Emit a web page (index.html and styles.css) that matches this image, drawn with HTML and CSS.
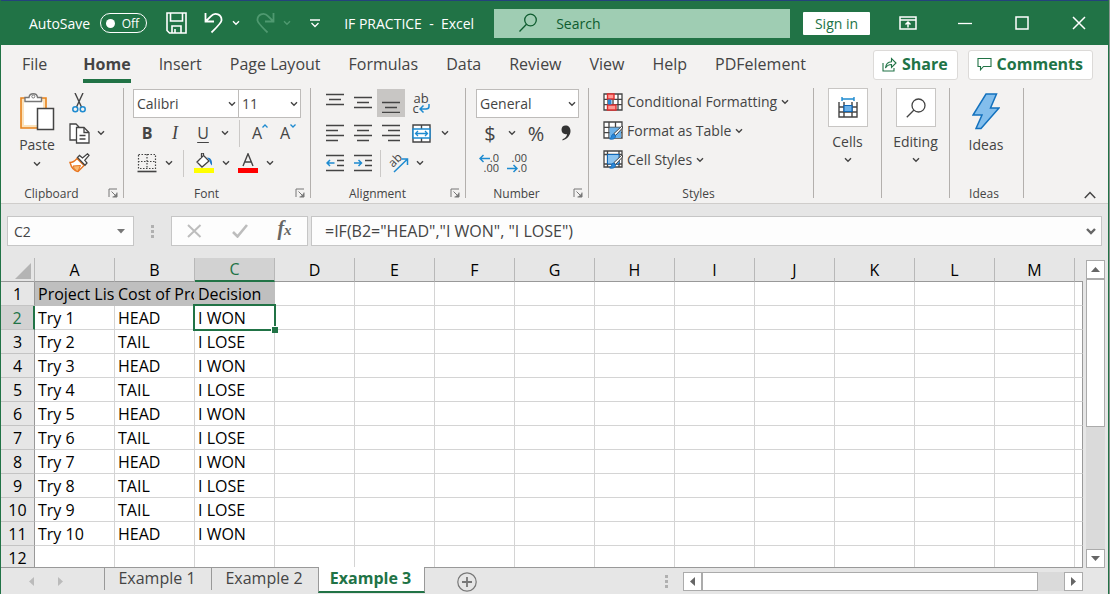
FILE: index.html
```html
<!DOCTYPE html>
<html lang="en">
<head>
    <meta charset="UTF-8">
    <meta name="viewport" content="width=device-width, initial-scale=1.0">
    <title>IF PRACTICE - Excel</title>
    <link rel="stylesheet" href="styles.css">
</head>
<body>

<svg class="defs" width="0" height="0" aria-hidden="true">
    <symbol id="chev" viewBox="0 0 8 6"><path d="M1 1.2l3 3 3-3" fill="none" stroke="currentColor" stroke-width="1.4"/></symbol>
    <symbol id="launcher" viewBox="0 0 10 10"><path d="M1 9V1h8M3.500 3.500l4 4M9 4.500v4.500H4.500" fill="none" stroke="#777"/><path d="M9 5v4H5z" fill="#777"/></symbol>
    <symbol id="brush" viewBox="0 0 14 14"><path d="M13.500.5L12.500.5 5 7.500l1.500 2L13.500 2z" fill="#fff" stroke="#444"/><path d="M5 8c-2 0-2.500 1.500-2.500 3L.5 13c3 .8 6 0 6-3z" fill="#2b88d8" stroke="#1068b8" stroke-width=".8"/></symbol>
</svg>

<div class="app">

<header class="titlebar">
    <label class="autosave">AutoSave
        <span class="toggle"><input type="checkbox" aria-label="AutoSave">Off</span>
    </label>
    <div class="quick">
        <button class="quick-btn save" aria-label="Save">
            <svg width="21" height="22" viewBox="0 0 21 22" fill="none" stroke="#fff" stroke-width="1.6"><path d="M1 1h19v20H3.500L1 18.500zM4.500 1v8h12V1M6 21v-7h9v7M9 21v-4"/></svg>
        </button>
        <button class="quick-btn" aria-label="Undo">
            <svg width="20" height="22" viewBox="0 0 20 22" fill="none" stroke="#fff" stroke-width="1.8"><path d="M1.500 1v8.500H10M1.500 9.500L7 4.200C11-.5 18 2.500 17.500 8.500c-.3 2.500-2 4-10 12"/></svg>
            <svg class="chev" width="8" height="6"><use href="#chev"/></svg>
        </button>
        <button class="quick-btn dim" aria-label="Redo">
            <svg width="20" height="22" viewBox="0 0 20 22" fill="none" stroke="currentColor" stroke-width="1.8"><path d="M18.500 1v8.500H10M18.500 9.500L13 4.200C9-.5 2 2.500 2.500 8.500c.3 2.500 2 4 10 12"/></svg>
            <svg class="chev" width="8" height="6"><use href="#chev"/></svg>
        </button>
        <button class="quick-btn customize" aria-label="Customize Quick Access Toolbar">
            <svg width="10" height="9" viewBox="0 0 10 9" fill="none" stroke="#fff" stroke-width="1.3"><path d="M0 1h10M1.500 4L5 7.500 8.500 4"/></svg>
        </button>
    </div>
    <h1 class="doc-title">IF PRACTICE &nbsp;- &nbsp;Excel</h1>
    <div class="search">
        <svg width="20" height="20" viewBox="0 0 20 20" fill="none" stroke="#0e5c2f" stroke-width="1.3"><circle cx="12.500" cy="7" r="5.800"/><path d="M8.500 11.200L1.500 18.500"/></svg>
        <input type="search" placeholder="Search" aria-label="Search">
    </div>
    <button class="sign-in">Sign in</button>
    <div class="window-btns">
        <button aria-label="Ribbon Display Options">
            <svg width="18" height="14" viewBox="0 0 18 14" fill="none" stroke="#fff" stroke-width="1.5"><path d="M1 1h16v12H1zM1 4h16M9 11.500V6M6.500 8.500L9 6l2.500 2.500"/></svg>
        </button>
        <button aria-label="Minimize">
            <svg width="14" height="14" viewBox="0 0 14 14"><path d="M0 7.500h14" stroke="#fff" stroke-width="1.300"/></svg>
        </button>
        <button aria-label="Maximize">
            <svg width="14" height="14" viewBox="0 0 14 14"><path d="M1 1h12v12H1z" fill="none" stroke="#fff" stroke-width="1.500"/></svg>
        </button>
        <button aria-label="Close">
            <svg width="14" height="14" viewBox="0 0 14 14"><path d="M1 1l12 12M13 1L1 13" stroke="#fff" stroke-width="1.500"/></svg>
        </button>
    </div>
</header>

<nav class="tabs">
    <button class="tab tab-file">File</button>
    <button class="tab active">Home</button>
    <button class="tab">Insert</button>
    <button class="tab">Page Layout</button>
    <button class="tab">Formulas</button>
    <button class="tab">Data</button>
    <button class="tab">Review</button>
    <button class="tab">View</button>
    <button class="tab">Help</button>
    <button class="tab">PDFelement</button>
    <div class="tab-actions">
        <button class="action">
            <svg width="15" height="15" viewBox="0 0 15 15" fill="none" stroke="#217346" stroke-width="1.100"><path d="M1 6v8h11v-3M3.500 11C4 6.500 6 5 9.500 4.800V1.500L14 6l-4.500 4.500V7.500C7 7.500 5 8.500 3.500 11z"/></svg>
            Share
        </button>
        <button class="action">
            <svg width="15" height="14" viewBox="0 0 15 14" fill="none" stroke="#217346" stroke-width="1.100"><path d="M1 1.500h13v8H6.500L3.500 12.800V9.500H1z"/></svg>
            Comments
        </button>
    </div>
</nav>

<section class="ribbon">
    <div class="group clipboard">
        <div class="group-body side">
            <button class="big">
                <svg width="36" height="40" viewBox="0 0 36 40"><path d="M2 6h25v30H2z" fill="#fbe3bd" stroke="#e8831c" stroke-width="1.600"/><path d="M5 9h19v24H5z" fill="#fff"/><path d="M6 9.500V5.500h4C10.500.5 18 .5 18.500 5.500h4v4z" fill="#fff" stroke="#777" stroke-width="1.400"/><circle cx="14.300" cy="4.500" r="1.500" fill="#fff" stroke="#777"/><path d="M18.500 16.500h16v21h-16z" fill="#fff" stroke="#444" stroke-width="1.500"/></svg>
                <span>Paste</span>
                <svg class="chev" width="8" height="6"><use href="#chev"/></svg>
            </button>
            <div class="rows">
                <div class="row">
                    <button class="btn" aria-label="Cut">
                        <svg width="14" height="20" viewBox="0 0 14 20" fill="none"><path d="M3 0l6.500 14M11 0L4.500 14" stroke="#444" stroke-width="1.400"/><circle cx="3.300" cy="16.300" r="2.500" stroke="#1e8bd0" stroke-width="1.500"/><circle cx="10.700" cy="16.300" r="2.500" stroke="#1e8bd0" stroke-width="1.500"/></svg>
                    </button>
                </div>
                <div class="row">
                    <button class="btn" aria-label="Copy">
                        <svg width="21" height="21" viewBox="0 0 21 21" fill="#fff" stroke="#444" stroke-width="1.300"><path d="M7 17H1V1h6l3 3M7.500 4.500h7.500l5 5V20H7.500z"/><path d="M15 4.500v5h5M10.500 12.500h6M10.500 16h6" fill="none"/></svg>
                    </button>
                    <button class="drop" aria-label="Copy options"><svg width="8" height="6"><use href="#chev"/></svg></button>
                </div>
                <div class="row">
                    <button class="btn" aria-label="Format Painter">
                        <svg width="21" height="20" viewBox="0 0 21 20"><path d="M8 5.500l7 7L9 18.500C6 18 2.500 15 1 9.500 4 9.500 6 8 8 5.500z" fill="#fff" stroke="#e8731c" stroke-width="1.400"/><path d="M4 13l7.500-.5L9 18.500C7 18 5.500 16.500 4 13z" fill="#f9b870" stroke="#e8731c"/><path d="M8.500 4.500l2-2 3 2.500L18.500.800l1.500 1.500-4.200 5 2.200 2.700-2 2.200z" fill="#fff" stroke="#444" stroke-width="1.300"/></svg>
                    </button>
                </div>
            </div>
        </div>
        <div class="group-foot"><span>Clipboard</span><button aria-label="Clipboard settings"><svg width="10" height="10"><use href="#launcher"/></svg></button></div>
    </div>

    <div class="group font">
        <div class="group-body">
            <div class="row">
                <span class="pick pick-font"><select aria-label="Font"><option>Calibri</option></select><svg width="8" height="6"><use href="#chev"/></svg></span>
                <span class="pick pick-size"><select aria-label="Font size"><option>11</option></select><svg width="8" height="6"><use href="#chev"/></svg></span>
            </div>
            <div class="row">
                <button class="btn bold">B</button>
                <button class="btn italic">I</button>
                <button class="btn underline">U</button>
                <button class="drop" aria-label="Underline style"><svg width="8" height="6"><use href="#chev"/></svg></button>
                <span class="sep"></span>
                <button class="btn" aria-label="Increase Font Size">A<svg class="sup" width="6" height="4" viewBox="0 0 6 4"><path d="M.5 3.500L3 1l2.500 2.500" fill="none" stroke="#1e8bd0" stroke-width="1.300"/></svg></button>
                <button class="btn" aria-label="Decrease Font Size">A<svg class="sup" width="6" height="4" viewBox="0 0 6 4"><path d="M.5.5L3 3 5.500.5" fill="none" stroke="#1e8bd0" stroke-width="1.300"/></svg></button>
            </div>
            <div class="row">
                <button class="btn" aria-label="Borders">
                    <svg width="20" height="20" viewBox="0 0 20 20" fill="none" stroke="#444"><path d="M1.500 1.500h17v14h-17zM10 1v15M1 8.500h18" stroke-dasharray="1.500 1.500" stroke-width="1.200"/><path d="M.5 18.500h19" stroke-width="1.600"/></svg>
                </button>
                <button class="drop" aria-label="Border options"><svg width="8" height="6"><use href="#chev"/></svg></button>
                <span class="sep"></span>
                <button class="btn" aria-label="Fill Color">
                    <svg width="20" height="20" viewBox="0 0 20 20"><path d="M9 3L3 9l5 5 7-6-5.500-5.500V1C9.500-.500 7.500-.500 7.500 1v4" fill="#fff" stroke="#444" stroke-width="1.300"/><path d="M13 4.500c4 0 5.500 3 5 8-1.500-1-2-3-2.500-5z" fill="#1e78c8"/><path d="M0 15h20v5H0z" fill="#ff0"/></svg>
                </button>
                <button class="drop" aria-label="Fill color options"><svg width="8" height="6"><use href="#chev"/></svg></button>
                <button class="btn" aria-label="Font Color">
                    <svg width="20" height="20" viewBox="0 0 20 20"><path d="M5 13L10 .800 15 13M6.500 9h7" fill="none" stroke="#444" stroke-width="1.400"/><path d="M0 15h20v5H0z" fill="red"/></svg>
                </button>
                <button class="drop" aria-label="Font color options"><svg width="8" height="6"><use href="#chev"/></svg></button>
            </div>
        </div>
        <div class="group-foot"><span>Font</span><button aria-label="Font settings"><svg width="10" height="10"><use href="#launcher"/></svg></button></div>
    </div>

    <div class="group align">
        <div class="group-body">
            <div class="row">
                <button class="btn" aria-label="Top Align"><svg width="18" height="20" viewBox="0 0 18 20"><path d="M0 1.500h18M3 6.500h12M0 11.500h18" stroke="#444" stroke-width="1.300"/></svg></button>
                <button class="btn" aria-label="Middle Align"><svg width="18" height="20" viewBox="0 0 18 20"><path d="M0 4.500h18M3 9.500h12M0 14.500h18" stroke="#444" stroke-width="1.300"/></svg></button>
                <button class="btn pressed" aria-label="Bottom Align"><svg width="18" height="20" viewBox="0 0 18 20"><path d="M0 9.500h18M3 14.500h12M0 19.300h18" stroke="#444" stroke-width="1.300"/></svg></button>
                <button class="btn wide wrap" aria-label="Wrap Text"><span>ab</span><span>c<svg width="11" height="9" viewBox="0 0 11 9" fill="none" stroke="#1e8bd0" stroke-width="1.500"><path d="M10 0v2.500c0 2-1 2.500-3 2.500H1.500M4.500 1.500L1 5l3.500 3.500"/></svg></span></button>
            </div>
            <div class="row">
                <button class="btn" aria-label="Align Left"><svg width="18" height="18" viewBox="0 0 18 18"><path d="M0 1.500h18M0 6.500h12M0 11.500h18M0 16.500h12" stroke="#444" stroke-width="1.400"/></svg></button>
                <button class="btn" aria-label="Center"><svg width="18" height="18" viewBox="0 0 18 18"><path d="M0 1.500h18M3 6.500h12M0 11.500h18M3 16.500h12" stroke="#444" stroke-width="1.400"/></svg></button>
                <button class="btn" aria-label="Align Right"><svg width="18" height="18" viewBox="0 0 18 18"><path d="M0 1.500h18M6 6.500h12M0 11.500h18M6 16.500h12" stroke="#444" stroke-width="1.400"/></svg></button>
                <button class="btn wide" aria-label="Merge and Center"><svg width="19" height="19" viewBox="0 0 19 19"><path d="M1 1h17v17H1zM9.500 1v17" fill="#fff" stroke="#444" stroke-width="1.400"/><path d="M1 5h17v9H1z" fill="#fff" stroke="#1e8bd0" stroke-width="1.500"/><path d="M3.500 9.500h12M6 7L3.500 9.500 6 12M13 7l2.500 2.500L13 12" fill="none" stroke="#1e8bd0" stroke-width="1.300"/></svg></button>
                <button class="drop" aria-label="Merge options"><svg width="8" height="6"><use href="#chev"/></svg></button>
            </div>
            <div class="row">
                <button class="btn" aria-label="Decrease Indent"><svg width="18" height="18" viewBox="0 0 18 18" fill="none"><path d="M0 1.500h18M11 6.500h7M11 11.500h7M0 16.500h18" stroke="#444" stroke-width="1.400"/><path d="M8.500 9H1M4 6L1 9l3 3" stroke="#1e8bd0" stroke-width="1.500"/></svg></button>
                <button class="btn" aria-label="Increase Indent"><svg width="18" height="18" viewBox="0 0 18 18" fill="none"><path d="M0 1.500h18M11 6.500h7M11 11.500h7M0 16.500h18" stroke="#444" stroke-width="1.400"/><path d="M0 9h7.500M4.500 6l3 3-3 3" stroke="#1e8bd0" stroke-width="1.500"/></svg></button>
                <span class="sep"></span>
                <button class="btn" aria-label="Orientation"><svg class="orient" width="22" height="20" viewBox="0 0 22 20"><text x="0" y="0" transform="translate(6 15) rotate(-45)" font-family="Open Sans" font-size="12" fill="#444">ab</text><path d="M7 19L20 6.500M14.500 6H20.500V12" fill="none" stroke="#1e8bd0" stroke-width="1.500"/></svg></button>
                <button class="drop" aria-label="Orientation options"><svg width="8" height="6"><use href="#chev"/></svg></button>
            </div>
        </div>
        <div class="group-foot"><span>Alignment</span><button aria-label="Alignment settings"><svg width="10" height="10"><use href="#launcher"/></svg></button></div>
    </div>

    <div class="group number">
        <div class="group-body">
            <div class="row">
                <span class="pick pick-number"><select aria-label="Number format"><option>General</option></select><svg width="8" height="6"><use href="#chev"/></svg></span>
            </div>
            <div class="row">
                <button class="btn sign">$</button>
                <button class="drop" aria-label="Currency options"><svg width="8" height="6"><use href="#chev"/></svg></button>
                <button class="btn sign wide">%</button>
                <button class="btn" aria-label="Comma Style"><svg width="10" height="16" viewBox="0 0 10 16"><path d="M4.500.5C7.500.5 9.500 2.500 9.500 6c0 4-3 8-8 9.500v-1.200C4.500 13 6 11 6 9 3 9.800.5 8 .5 4.800.5 2 2.200.5 4.500.5z" fill="#333"/></svg></button>
            </div>
            <div class="row">
                <button class="btn decimals" aria-label="Increase Decimal"><span><svg width="11" height="9" viewBox="0 0 11 9" fill="none" stroke="#1e8bd0" stroke-width="1.500"><path d="M11 4.500H1M4.500 1L1 4.500 4.500 8"/></svg>.0</span><span>.00</span></button>
                <button class="btn decimals" aria-label="Decrease Decimal"><span>.00</span><span><svg width="11" height="9" viewBox="0 0 11 9" fill="none" stroke="#1e8bd0" stroke-width="1.500"><path d="M0 4.500h10M6.500 1L10 4.500 6.500 8"/></svg>.0</span></button>
            </div>
        </div>
        <div class="group-foot"><span>Number</span><button aria-label="Number settings"><svg width="10" height="10"><use href="#launcher"/></svg></button></div>
    </div>

    <div class="group styles">
        <div class="group-body">
            <button class="style-btn">
                <svg width="20" height="18" viewBox="0 0 20 18"><path d="M1 1h18v16H1zM1 6.300h18M1 11.700h18M5 1v16M10 1v16M15 1v16" fill="#fff" stroke="#444" stroke-width="1.300"/><path d="M4.500 1H11v5H4.500zM4.500 12H13v5H4.500z" fill="#ff9a94" stroke="#e03030" stroke-width="1.400"/><path d="M5 6.500h3.500v5H5z" fill="#2b88d8"/></svg>
                Conditional Formatting
                <svg class="chev" width="8" height="6"><use href="#chev"/></svg>
            </button>
            <button class="style-btn">
                <svg width="20" height="19" viewBox="0 0 20 19"><path d="M1 1h18v16H1zM1 6.300h18M1 11.700h18M6 1v16M12.500 1v16" fill="#fff" stroke="#444" stroke-width="1.300"/><path d="M6.500 6.500H18v10.500H6.500z" fill="#6cb2ea"/><use href="#brush" x="6" y="5" width="14" height="14"/></svg>
                Format as Table
                <svg class="chev" width="8" height="6"><use href="#chev"/></svg>
            </button>
            <button class="style-btn">
                <svg width="20" height="19" viewBox="0 0 20 19"><path d="M1 1h18v16H1zM1 4.500h18M1 14h18M4.500 1v16M16 1v16" fill="#fff" stroke="#444" stroke-width="1.300"/><path d="M4.500 4.500H16V14H4.500z" fill="#8cc4f0" stroke="#1068b8"/><use href="#brush" x="6" y="5" width="14" height="14"/></svg>
                Cell Styles
                <svg class="chev" width="8" height="6"><use href="#chev"/></svg>
            </button>
        </div>
        <div class="group-foot"><span>Styles</span></div>
    </div>

    <div class="group narrow">
        <button class="boxed">
            <span class="box"><svg width="20" height="22" viewBox="0 0 20 22"><path d="M1 5v15h18V5M1 10h18M1 15h18M6 5v15M14 5v15" fill="none" stroke="#444" stroke-width="1.400"/><path d="M6 8.500h8v6H6z" fill="#6cb2ea" stroke="#1068b8" stroke-width="1.200"/><path d="M4 2h12M4 0v4M16 0v4" fill="none" stroke="#1e8bd0" stroke-width="1.400"/></svg></span>
            <span>Cells</span>
            <svg class="chev" width="8" height="6"><use href="#chev"/></svg>
        </button>
    </div>
    <div class="group narrow">
        <button class="boxed">
            <span class="box"><svg width="20" height="20" viewBox="0 0 20 20" fill="none" stroke="#444" stroke-width="1.300"><circle cx="12.500" cy="7.500" r="6.500"/><path d="M8 12L.8 19.200"/></svg></span>
            <span>Editing</span>
            <svg class="chev" width="8" height="6"><use href="#chev"/></svg>
        </button>
    </div>
    <div class="group ideas">
        <div class="group-body">
            <button class="big">
                <svg width="28" height="38" viewBox="0 0 28 38"><path d="M14 2h10.500l-6 14H27L9 36.500H4L10 23H1z" fill="#83beec" stroke="#1371bd" stroke-width="1.500"/></svg>
                <span>Ideas</span>
            </button>
        </div>
        <div class="group-foot"><span>Ideas</span></div>
    </div>
    <button class="collapse" aria-label="Collapse the Ribbon">
        <svg width="12" height="8" viewBox="0 0 12 8"><path d="M.8 7L6 1.500 11.200 7" fill="none" stroke="#444" stroke-width="1.500"/></svg>
    </button>
</section>

<section class="formula-bar">
    <div class="name-box">
        <input type="text" value="C2" aria-label="Name Box">
        <svg width="8" height="5" viewBox="0 0 8 5"><path d="M0 0h8L4 4.500z" fill="#777"/></svg>
    </div>
    <svg class="dots" width="3" height="13" viewBox="0 0 3 13"><path d="M0 0h3v3H0zM0 5h3v3H0zM0 10h3v3H0z" fill="#b0b0b0"/></svg>
    <div class="entry">
        <button aria-label="Cancel"><svg width="15" height="14" viewBox="0 0 15 14"><path d="M1 1l12.500 12M13.500 1L1 13" stroke="#bdbdbd" stroke-width="2"/></svg></button>
        <button aria-label="Enter"><svg width="16" height="14" viewBox="0 0 16 14"><path d="M1 8l4.500 4.500L15 1" fill="none" stroke="#bdbdbd" stroke-width="2.600"/></svg></button>
        <button class="fx" aria-label="Insert Function">f<small>x</small></button>
    </div>
    <div class="formula">
        <input type="text" value="=IF(B2=&quot;HEAD&quot;,&quot;I WON&quot;, &quot;I LOSE&quot;)" aria-label="Formula Bar">
        <svg width="10" height="7" viewBox="0 0 10 7"><path d="M1 1l4 4 4-4" fill="none" stroke="#666" stroke-width="2.400"/></svg>
    </div>
</section>

<main class="sheet">
    <div class="grid">
        <table>
            <thead><tr id="cols"></tr></thead>
            <tbody id="rows"></tbody>
        </table>
    </div>
    <div class="vscroll">
        <button aria-label="Scroll up"><svg width="9" height="5" viewBox="0 0 9 5"><path d="M0 5L4.500 0 9 5z" fill="#666"/></svg></button>
        <div class="thumb"></div>
        <button aria-label="Scroll down"><svg width="9" height="5" viewBox="0 0 9 5"><path d="M0 0h9L4.500 5z" fill="#666"/></svg></button>
    </div>
</main>

<footer class="sheet-bar">
    <div class="sheet-nav">
        <button aria-label="Previous sheet"><svg width="5" height="9" viewBox="0 0 5 9"><path d="M5 0v9L0 4.500z" fill="#bbb"/></svg></button>
        <button aria-label="Next sheet"><svg width="5" height="9" viewBox="0 0 5 9"><path d="M0 0v9l5-4.500z" fill="#bbb"/></svg></button>
    </div>
    <button class="sheet-tab">Example 1</button>
    <button class="sheet-tab">Example 2</button>
    <button class="sheet-tab active">Example 3</button>
    <button class="add-sheet" aria-label="New sheet">
        <svg width="20" height="20" viewBox="0 0 20 20" fill="none" stroke="#777"><circle cx="10" cy="10" r="9.200" stroke-width="1.200"/><path d="M10 5v10M5 10h10" stroke-width="1.800"/></svg>
    </button>
    <svg class="dots" width="3" height="13" viewBox="0 0 3 13"><path d="M0 0h3v3H0zM0 5h3v3H0zM0 10h3v3H0z" fill="#b0b0b0"/></svg>
    <div class="hscroll">
        <button aria-label="Scroll left"><svg width="5" height="9" viewBox="0 0 5 9"><path d="M5 0v9L0 4.500z" fill="#666"/></svg></button>
        <div class="thumb"></div>
        <button aria-label="Scroll right"><svg width="5" height="9" viewBox="0 0 5 9"><path d="M0 0v9l5-4.500z" fill="#666"/></svg></button>
    </div>
</footer>

</div>

<script>
    const letters = ['A', 'B', 'C', 'D', 'E', 'F', 'G', 'H', 'I', 'J', 'K', 'L', 'M', ''];
    const data = [['Project List', 'Cost of Project', 'Decision']];
    const flips = ['HEAD', 'TAIL', 'HEAD', 'TAIL', 'HEAD', 'TAIL', 'HEAD', 'TAIL', 'TAIL', 'HEAD'];

    flips.forEach((flip, i) => {
        data.push([`Try ${i + 1}`, flip, flip === 'HEAD' ? 'I WON' : 'I LOSE']);
    });
    data.push([]);

    const corner = '<th class="corner"><svg width="16" height="16" viewBox="0 0 16 16"><path d="M16 0v16H0z" fill="#b4b4b4"/></svg></th>';
    document.getElementById('cols').innerHTML = corner + letters.map(l =>
        `<th class="${l === 'C' ? 'selected' : ''}${l ? '' : 'rest'}">${l}</th>`
    ).join('');

    document.getElementById('rows').innerHTML = data.map((row, r) => {
        const cells = letters.map((l, c) => {
            let cls = '';
            if (r === 0 && c < 3) cls = 'shaded';
            if (r === 1 && c === 2) cls = 'current';
            return `<td class="${cls}">${row[c] || ''}</td>`;
        }).join('');
        return `<tr><th class="${r === 1 ? 'selected' : ''}">${r + 1}</th>${cells}</tr>`;
    }).join('');
</script>

</body>
</html>
```

FILE: styles.css
```css
* {
    box-sizing: border-box;
}
body {
    margin: 0;
    padding-right: 1px;
    background-color: #8a958f;
    font-family: "Open Sans", "Noto Sans", sans-serif;
    font-size: 14px;
    color: #444;
}
button, input, select {
    font: inherit;
    color: inherit;
    margin: 0;
    padding: 0;
    border: none;
    border-radius: 0;
    background: none;
    outline: none;
    appearance: none;
}
button {
    display: flex;
    align-items: center;
    justify-content: center;
    white-space: nowrap;
}
svg {
    display: block;
    flex: none;
}
.defs {
    position: absolute;
}
.app {
    display: flex;
    flex-direction: column;
    height: 100vh;
    overflow: hidden;
    border-left: 1px solid #217346;
    border-right: 1px solid #217346;
    background-color: #e6e6e6;
}

/* title bar */
.titlebar {
    display: flex;
    align-items: center;
    flex: none;
    height: 45px;
    padding-left: 28px;
    border-top: 1px solid #24427c;
    background-color: #217346;
    color: #fff;
}
.autosave {
    display: flex;
    align-items: center;
    gap: 10px;
}
.toggle {
    display: flex;
    align-items: center;
    justify-content: space-between;
    width: 47px;
    height: 20px;
    padding: 0 7px 0 5px;
    border: 1px solid #fff;
    border-radius: 10px;
    font-size: 12px;
}
.toggle input {
    width: 9px;
    height: 9px;
    border-radius: 50%;
    background-color: #fff;
}
.quick {
    display: flex;
    align-items: center;
    gap: 15px;
    margin-left: 19px;
}
.quick-btn {
    gap: 8px;
}
.quick-btn.save {
    margin-right: 2px;
}
.quick-btn.customize {
    margin-left: 4px;
}
.quick-btn.dim {
    color: #4f9970;
}
.doc-title {
    margin: 0 20px 0 24px;
    font-size: 14px;
    font-weight: normal;
    white-space: nowrap;
}
.search {
    display: flex;
    align-items: center;
    flex: 1;
    gap: 18px;
    height: 29px;
    padding-left: 24px;
    background-color: #9fcdb3;
    color: #0e5c2f;
}
.search input {
    flex: 1;
    min-width: 0;
}
.search input::placeholder {
    color: #0e5c2f;
    opacity: 1;
}
.sign-in {
    width: 67px;
    height: 23px;
    margin-left: 13px;
    border-radius: 1px;
    background-color: #fff;
    color: #217346;
}
.window-btns {
    display: flex;
    margin: 0 1px 0 9px;
}
.window-btns button {
    width: 57px;
    height: 40px;
}

/* ribbon tabs */
.tabs {
    display: flex;
    align-items: center;
    flex: none;
    height: 39px;
    padding: 0 15px 0 21px;
    gap: 28px;
    background-color: #f3f2f1;
    font-size: 16px;
}
.tab {
    height: 36px;
    padding-bottom: 2px;
    border-bottom: 4px solid transparent;
    border-top: 4px solid transparent;
}
.tab-file {
    margin-right: 8px;
}
.tab.active {
    border-bottom-color: #217346;
    font-weight: bold;
}
.tab-actions {
    display: flex;
    gap: 10px;
    margin-left: auto;
}
.action {
    height: 30px;
    padding: 0 9px 1px 8px;
    gap: 5px;
    border: 1px solid #dcdad8;
    border-radius: 3px;
    background-color: #fff;
    color: #217346;
    font-weight: bold;
}

/* ribbon */
.ribbon {
    display: flex;
    flex: none;
    height: 120px;
    padding-top: 4px;
    border-bottom: 1px solid #cfcdcb;
    background-color: #f3f2f1;
}
.group {
    display: flex;
    flex-direction: column;
    height: 110px;
    border-right: 1px solid #b3b0ad;
}
.clipboard { width: 123px; }
.font { width: 187px; }
.align { width: 155px; }
.number { width: 123px; }
.styles { width: 225px; }
.narrow { width: 68px; }
.ideas { width: 74px; }
.group-body {
    flex: 1;
    padding-left: 9px;
}
.group-body.side {
    display: flex;
    gap: 1px;
}
.row {
    display: flex;
    align-items: center;
    height: 30px;
}
.btn {
    width: 28px;
    height: 28px;
    font-size: 16px;
}
.btn.wide {
    width: 32px;
}
.drop {
    width: 16px;
    height: 28px;
}
.sep {
    width: 1px;
    height: 27px;
    margin: 0 6px;
    background-color: #cbc9c7;
}
.align .group-body, .number .group-body {
    padding-left: 10px;
}
.align .sep {
    margin: 0 3px;
}
.pressed {
    background-color: #c8c6c4;
}
.bold {
    font-weight: bold;
}
.italic {
    font-family: "Liberation Serif", serif;
    font-style: italic;
    font-size: 18px;
}
.underline {
    text-decoration: underline;
    text-underline-offset: 3px;
}
.sup {
    align-self: flex-start;
    margin-top: 5px;
}
.sign {
    font-size: 20px;
}
.orient {
    overflow: visible;
}
.wrap {
    flex-direction: column;
    font-size: 13px;
    line-height: 10px;
}
.wrap span {
    display: flex;
    align-items: center;
}
.decimals {
    flex-direction: column;
    align-items: stretch;
    font-size: 11px;
    line-height: 10px;
}
.decimals span {
    display: flex;
    align-items: center;
    justify-content: flex-end;
    width: 23px;
}
.pick {
    position: relative;
    height: 29px;
}
.pick select {
    width: 100%;
    height: 100%;
    padding-left: 3px;
    border: 1px solid #bebcba;
    background-color: #fff;
}
.pick svg {
    position: absolute;
    right: 3px;
    top: 12px;
    pointer-events: none;
}
.pick-font { width: 106px; }
.pick-size { width: 62px; }
.pick-size select { border-left: none; }
.pick-number { width: 103px; }
.big {
    flex-direction: column;
    width: 54px;
    height: 84px;
    gap: 3px;
    justify-content: flex-start;
    padding-top: 4px;
    line-height: 20px;
}
.big .chev {
    margin-top: 3px;
}
.ideas .big {
    gap: 5px;
}
.style-btn {
    height: 29px;
    gap: 4px;
    padding: 0 0 2px 5px;
}
.boxed {
    flex-direction: column;
    width: 100%;
    line-height: 20px;
    gap: 5px;
}
.box {
    display: flex;
    align-items: center;
    justify-content: center;
    width: 40px;
    height: 39px;
    border: 1px solid #c8c6c4;
    background-color: #fff;
}
.group-foot {
    display: flex;
    align-items: center;
    height: 10px;
    padding-right: 5px;
    font-size: 12px;
}
.group-foot span {
    flex: 1;
    text-align: center;
}
.group-foot button {
    margin-left: 6px;
}
.collapse {
    align-self: flex-end;
    margin: 0 12px 4px auto;
}

/* formula bar */
.formula-bar {
    display: flex;
    align-items: center;
    flex: none;
    height: 54px;
    padding: 0 6px;
}
.name-box, .entry, .formula {
    display: flex;
    align-items: center;
    height: 30px;
    border: 1px solid #c6c6c6;
    background-color: #fdfdfd;
}
.name-box {
    width: 127px;
    padding: 0 8px 0 6px;
}
.name-box input, .formula input {
    flex: 1;
    min-width: 0;
}
.formula-bar .dots {
    margin: 0 17px;
}
.entry {
    width: 137px;
}
.entry button {
    flex: 1;
    height: 100%;
}
.fx {
    align-items: baseline;
    font-family: "Liberation Serif", serif;
    font-size: 20px;
    font-style: italic;
    font-weight: bold;
    color: #666;
}
.fx small {
    font-size: 15px;
}
.formula {
    flex: 1;
    margin-left: 3px;
    padding: 0 5px 0 13px;
    font-size: 16px;
}

/* worksheet */
.sheet {
    display: flex;
    flex: 1;
    min-height: 0;
}
.grid {
    flex: 1;
    overflow: hidden;
    border-bottom: 1px solid #999;
}
table {
    width: 100%;
    table-layout: fixed;
    border-collapse: separate;
    border-spacing: 0;
    font-size: 16px;
    line-height: 20px;
    color: #000;
}
th, td {
    height: 24px;
    padding: 0;
}
th {
    font-weight: normal;
    text-align: center;
    background-color: #e6e6e6;
}
thead th {
    width: 80px;
    border-right: 1px solid #b8b8b8;
    border-bottom: 1px solid #999;
}
thead th.corner {
    width: 34px;
}
thead th.rest {
    width: auto;
    border-right: none;
}
.corner svg {
    margin: 3px 0 0 14px;
}
tbody th {
    border-right: 1px solid #999;
    border-bottom: 1px solid #c4c4c4;
}
thead th.selected {
    background-color: #d2d2d2;
    border-bottom: 2px solid #217346;
    color: #217346;
}
tbody th.selected {
    background-color: #d2d2d2;
    border-right: 2px solid #217346;
    color: #217346;
}
td {
    padding-left: 3px;
    border-right: 1px solid #d4d4d4;
    border-bottom: 1px solid #d4d4d4;
    background-color: #fff;
    white-space: nowrap;
    overflow: hidden;
}
td:last-child {
    border-right-color: #999;
}
td.shaded {
    background-color: #bfbfbf;
    border-color: #bfbfbf;
}
td.current {
    position: relative;
    overflow: visible;
}
/* selection frame and its fill handle */
td.current::before {
    content: "";
    position: absolute;
    inset: -2px;
    border: 2px solid #217346;
}
td.current::after {
    content: "";
    position: absolute;
    right: -4px;
    bottom: -4px;
    width: 6px;
    height: 6px;
    border-top: 1px solid #fff;
    border-left: 1px solid #fff;
    background-color: #217346;
}
.vscroll {
    display: flex;
    flex-direction: column;
    width: 19px;
    margin: 2px 3px 0 3px;
    background-color: #dadada;
}
.vscroll button, .hscroll button {
    flex: none;
    width: 19px;
    height: 19px;
    border: 1px solid #ababab;
    background-color: #fff;
}
.vscroll button:last-child, .hscroll button:last-child {
    margin: auto 0 0 auto;
}
.thumb {
    border: 1px solid #ababab;
    background-color: #fff;
}
.vscroll .thumb {
    height: 48%;
}

/* sheet tabs */
.sheet-bar {
    display: flex;
    align-items: flex-start;
    flex: none;
    height: 26px;
    padding-right: 25px;
    font-size: 16px;
}
.sheet-nav {
    display: flex;
    align-items: center;
    width: 103px;
    height: 26px;
    padding-left: 28px;
    gap: 24px;
}
.sheet-tab {
    width: 107px;
    height: 22px;
    padding: 0 2px 2px 0;
    border-left: 1px solid #999;
}
.sheet-tab.active {
    height: 26px;
    margin-top: -1px;
    border-right: 1px solid #999;
    border-bottom: 2px solid #217346;
    background-color: #fff;
    color: #217346;
    font-weight: bold;
}
.add-sheet {
    margin: 4px 0 0 32px;
}
.sheet-bar .dots {
    margin: 7px 15px 0 auto;
}
.hscroll {
    display: flex;
    width: 37%;
    height: 19px;
    margin-top: 4px;
    background-color: #dadada;
}
.hscroll .thumb {
    width: 84%;
}
```
